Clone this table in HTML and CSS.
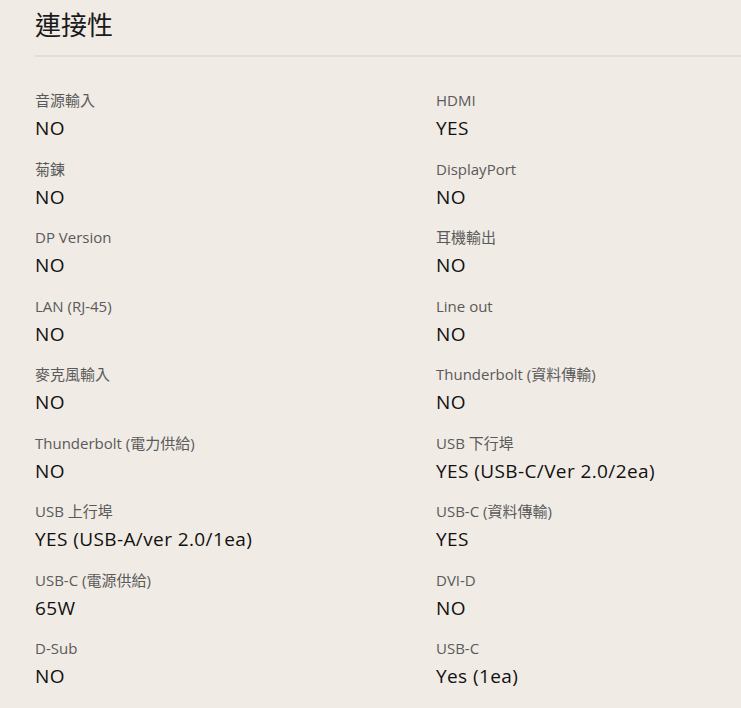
FILE: index.html
```html
<!DOCTYPE html>
<html lang="zh-Hant">
<head>
<meta charset="utf-8">
<link rel="stylesheet" href="styles.css">
</head>
<body>
<section class="spec">
  <h2 class="spec-title">連接性</h2>
  <dl class="spec-grid">
    <div class="item"><dt>音源輸入</dt><dd>NO</dd></div>
    <div class="item"><dt>HDMI</dt><dd>YES</dd></div>
    <div class="item"><dt>菊鍊</dt><dd>NO</dd></div>
    <div class="item"><dt>DisplayPort</dt><dd>NO</dd></div>
    <div class="item"><dt>DP Version</dt><dd>NO</dd></div>
    <div class="item"><dt>耳機輸出</dt><dd>NO</dd></div>
    <div class="item"><dt>LAN (RJ-45)</dt><dd>NO</dd></div>
    <div class="item"><dt>Line out</dt><dd>NO</dd></div>
    <div class="item"><dt>麥克風輸入</dt><dd>NO</dd></div>
    <div class="item"><dt>Thunderbolt (資料傳輸)</dt><dd>NO</dd></div>
    <div class="item"><dt>Thunderbolt (電力供給)</dt><dd>NO</dd></div>
    <div class="item"><dt>USB 下行埠</dt><dd>YES (USB-C/Ver 2.0/2ea)</dd></div>
    <div class="item"><dt>USB 上行埠</dt><dd>YES (USB-A/ver 2.0/1ea)</dd></div>
    <div class="item"><dt>USB-C (資料傳輸)</dt><dd>YES</dd></div>
    <div class="item"><dt>USB-C (電源供給)</dt><dd>65W</dd></div>
    <div class="item"><dt>DVI-D</dt><dd>NO</dd></div>
    <div class="item"><dt>D-Sub</dt><dd>NO</dd></div>
    <div class="item"><dt>USB-C</dt><dd>Yes (1ea)</dd></div>
  </dl>
</section>
</body>
</html>
```
FILE: styles.css
```css
html, body {
  margin: 0;
  padding: 0;
  background: #f0ebe5;
}
body {
  font-family: "Open Sans", "Noto Sans CJK TC", sans-serif;
  color: #111;
  width: 741px;
  overflow: hidden;
}
.spec {
  padding: 6px 0 0 35px;
}
.spec-title {
  margin: 0;
  font-family: "Noto Sans CJK TC", sans-serif;
  font-weight: 400;
  font-size: 26px;
  line-height: 36px;
  color: #1a1a1a;
  padding-bottom: 13px;
  border-bottom: 2px solid #e3ded8;
  margin-right: -10px;
}
.spec-grid {
  margin: 0;
  padding-top: 32px;
  display: grid;
  grid-template-columns: 401px 1fr;
  row-gap: 15.5px;
}
.item dt {
  font-size: 15px;
  line-height: 22px;
  color: #5a5a5a;
}
.item dd {
  margin: 3px 0 0;
  font-size: 19px;
  line-height: 28px;
  letter-spacing: 0.4px;
  color: #111;
}
```
